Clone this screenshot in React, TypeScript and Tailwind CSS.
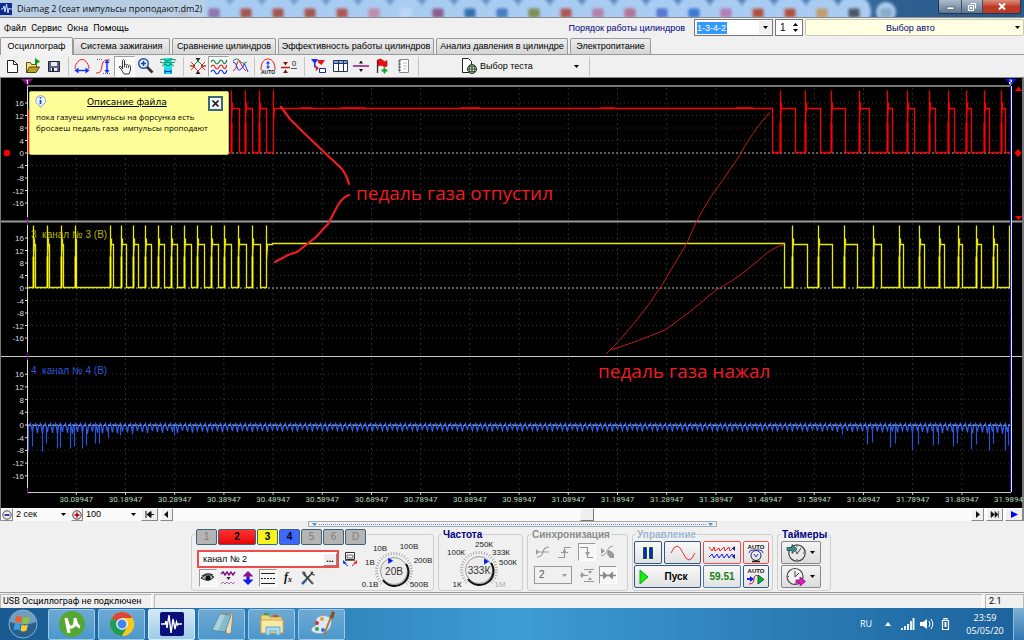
import React from "react";

type Pulse = [number, number];

const RED_LEFT: Pulse[] = [[231, 239], [245, 252], [259, 266]];
const RED_RIGHT: Pulse[] = [
  [780, 795], [805, 820], [831, 845], [859, 869], [887, 892], [907, 914],
  [929, 935], [948, 954], [966, 971], [984, 989], [1001, 1005],
];
const YELLOW_LEFT: Pulse[] = [
  [33, 35], [47, 49], [61, 63], [75, 76], [110, 113], [121, 126], [133, 138],
  [145, 151], [158, 164], [171, 177], [184, 191], [197, 204], [211, 218],
  [224, 231], [238, 246], [252, 260],
];
const YELLOW_RIGHT: Pulse[] = [
  [792, 807], [818, 832], [844, 857], [873, 881], [899, 903], [919, 924],
  [939, 944], [958, 962], [976, 981], [993, 997],
];

function pulseTrain(pulses: Pulse[], low: number, high: number, top: number) {
  return pulses
    .map(([rise, fall]) => `L${rise} ${low}V${top}V${high + 14}L${rise + 1} ${high - 6}V${high}H${fall}V${low}`)
    .join("");
}

function spikes(pulses: Pulse[], from: number, to: number) {
  return pulses.map(([rise]) => `M${rise} ${from}V${to}`).join("");
}

const redPath =
  "M28 109V152H229" + pulseTrain(RED_LEFT, 152, 108, 90) +
  "L273 152V90V122L274 108H772V152" + pulseTrain(RED_RIGHT, 152, 108, 90) + "H1010";
const yellowPath =
  "M28 287" + pulseTrain(YELLOW_LEFT, 287, 244, 225) +
  "L266 287V225V260L267 244H272V243H784V287" + pulseTrain(YELLOW_RIGHT, 287, 244, 225) + "H1009V225";

const DEEP: Pulse[] = [
  [28, 451], [32, 446], [42, 451], [46, 443], [57, 448], [60, 447], [70, 448],
  [74, 446], [82, 448], [86, 445], [95, 443], [99, 443], [108, 438], [120, 435],
  [132, 434], [174, 435], [842, 434], [867, 444], [872, 442], [890, 447],
  [895, 443], [912, 450], [918, 444], [933, 445], [938, 444], [953, 446],
  [957, 443], [971, 449], [976, 444], [989, 450], [993, 443], [1005, 450], [1008, 445],
];

function ripplePath() {
  let d = "M28 426";
  let k = 0;
  for (let x = 29; x < 1007; x += 5, k++) {
    const edge = x < 300 ? (300 - x) / 100 : x > 800 ? (x - 800) / 90 : 0;
    const dip = 429 + (k % 3) + edge;
    d += `L${x} 425L${x + 1} 423L${x + 2} 427L${x + 3} ${dip.toFixed(1)}L${x + 4} 425`;
  }
  return d;
}

const PANELS = [
  { zero: 153, step: 12.5 },
  { zero: 288, step: 12.5 },
  { zero: 425, step: 12.7 },
];
const LEVELS = [16, 12, 8, 4, 0, -4, -8, -12, -16];
const TIMES = Array.from({ length: 19 }, (_, i) => ({
  x: 76.3 + i * 49.2,
  label: (30.08947 + i * 0.1).toFixed(5),
}));

function Scope() {
  return (
    <svg viewBox="0 78 1024 430" className="block w-full bg-black" role="img" aria-label="Осциллограмма">
      <rect x="0" y="78" width="1" height="430" fill="#777" />
      <rect x="1022" y="78" width="2" height="430" fill="#777" />
      {TIMES.map((t) => (
        <g key={t.label}>
          <path d={`M${t.x} 88V491`} stroke="#2b2b2b" strokeDasharray="2 3" />
          <path d={`M${t.x} 492v3`} stroke="#ccc" />
          <text x={t.x} y="502" textAnchor="middle" fontSize="8" fill="#b9dcb9" className="font-['Roboto',sans-serif]">
            {t.label}
          </text>
        </g>
      ))}
      <text x="994" y="502" fontSize="8" fill="#b9dcb9" className="font-['Roboto',sans-serif]">31.9894</text>
      {PANELS.map((p) =>
        LEVELS.map((v) => {
          const y = p.zero - (v / 4) * p.step;
          return (
            <g key={`${p.zero}:${v}`}>
              <path d={`M28 ${y}H1010`} stroke={v === 0 ? "#b8b8b8" : "#303030"} strokeDasharray={v === 0 ? "2 2" : "1 3"} />
              <path d={`M25 ${y}h3`} stroke="#ddd" />
              <text x="24" y={y + 3} textAnchor="end" fontSize="8" fill="#d5dde6" className="font-['Liberation_Sans',sans-serif]">
                {v}
              </text>
            </g>
          );
        })
      )}
      <path d="M27 86H1011" stroke="#777" strokeWidth="2" />
      <path d="M1 221.500H1022" stroke="#999" strokeWidth="2" />
      <path d="M1 356.500H1022" stroke="#ccc" />
      <path d="M27 492.500H1011" stroke="#ccc" />
      <path d="M27.500 86V492" stroke="#ddd" />
      <path d="M27.500 82v4M27.500 217v8M27.500 352v8M27.500 488v6" stroke="#8a118a" />
      <g className="font-['Liberation_Sans',sans-serif]" fontSize="10">
        <text x="31" y="238" fill="#b4b400" xmlSpace="preserve">3  канал № 3 (В)</text>
        <text x="31" y="374" fill="#2f58d8" xmlSpace="preserve">4  канал № 4 (В)</text>
      </g>
      <g transform="translate(.5 .5)" fill="none">
        <path d={redPath} stroke="#f80000" strokeWidth="1.300" />
        <path d={spikes(RED_LEFT.concat(RED_RIGHT), 122, 152)} stroke="#ff0000" strokeWidth="2" />
        <path d="M300 107.500h12M340 107.500h25M460 107.500h20M600 107.500h14M735 107.500h18" stroke="#f80000" strokeWidth="1.500" />
        <path d={yellowPath} stroke="#e8e800" strokeWidth="1.300" />
        <path d={spikes(YELLOW_LEFT.concat(YELLOW_RIGHT), 256, 287)} stroke="#ffff00" strokeWidth="1.800" />
        <path d={ripplePath()} stroke="#2f62ee" strokeWidth="1.200" />
        <path d={DEEP.map(([x, y]) => `M${x} 426V${y}`).join("")} stroke="#2a54d4" strokeWidth="1.200" />
        <path d="M28 425H1010" stroke="#8fa8ff" strokeDasharray="2 3" />
      </g>

      <path d="M281 107L290 119L303 132L325 153L340 167Q346 173 349 184" fill="none" stroke="#ed1c24" strokeWidth="2.200" strokeLinecap="round" />
      <path d="M275 262L288 255L297 252L316 237L328 224L338 205Q343 197 349 195" fill="none" stroke="#ed1c24" strokeWidth="2.200" strokeLinecap="round" />
      <path d="M770 112Q752 132 738 158L720 184Q700 210 687 243L662 285Q636 325 606 354" fill="none" stroke="#c2181e" />
      <path d="M784 245Q774 246 760 259Q736 280 716 290Q690 313 665 330Q636 342 611 350" fill="none" stroke="#c2181e" />
      <g className="font-['Open_Sans',sans-serif]" fontSize="19" fill="#ed1c24">
        <text x="356" y="200">педаль газа отпустил</text>
        <text x="598" y="378">педаль газа нажал</text>
      </g>

      <path d="M21 79h12l-6 6z" fill="#8a118a" />
      <path d="M26.500 80.500l1-.5v4" stroke="#fff" fill="none" />
      <path d="M1005 79h12l-6 6z" fill="#0a0aff" />
      <path d="M1009.500 80h2v2h-2v2h2" stroke="#fff" fill="none" />
      <path d="M1010.500 86V492" stroke="#1010e8" />
      <path d="M1011.500 86V492" stroke="#e8e8ff" />
      <circle cx="7" cy="153" r="3.200" fill="#f00" />
      <path d="M1015 91l3.500-4.500L1022 91zM1015 216h7l-3.500 4.500zM1018 149l3.500 4-3.500 4-3.500-4z" fill="#f00" />
    </svg>
  );
}

function Icon({ children, w = 18, h = 18 }: { children: React.ReactNode; w?: number; h?: number }) {
  return (
    <svg width={w} height={h} viewBox={`0 0 ${w} ${h}`} fill="none" aria-hidden="true" className="shrink-0">
      {children}
    </svg>
  );
}

function ToolButton({ label, pressed, children }: { label: string; pressed?: boolean; children: React.ReactNode }) {
  return (
    <button
      type="button"
      aria-label={label}
      title={label}
      className={
        "flex h-[21px] w-[21px] items-center justify-center border " +
        (pressed ? "border-[#a0a0a0] border-r-white border-b-white bg-[#fafafa]" : "border-transparent")
      }
    >
      <Icon>{children}</Icon>
    </button>
  );
}

function Separator() {
  return <span className="mr-[2px] ml-[4px] h-[19px] w-px bg-[#c4c4c4]" />;
}

function WideSeparator() {
  return <span className="mr-[3px] ml-[5px] h-[19px] w-px bg-[#c4c4c4]" />;
}

function Toolbar() {
  return (
    <div className="flex h-[23px] items-center border-b border-[#888] bg-[#f0f0f0] pl-px" role="toolbar">
      <ToolButton label="Новый">
        <path d="M4.500 3.500h6l4 4v8h-10z" fill="#fff" stroke="#222" />
        <path d="M10.500 3.500v4h4" stroke="#222" />
      </ToolButton>
      <ToolButton label="Открыть">
        <path d="M2.500 15.500v-10h4l1 2h5v3" fill="#f5e27a" stroke="#5b5210" />
        <path d="M2.500 15.500l3-5.500h10l-3.500 5.500z" fill="#b9a02c" stroke="#4e4708" />
        <path d="M11 1l5 3.500-5 3.500z" fill="#0a9a1a" />
      </ToolButton>
      <ToolButton label="Сохранить">
        <path d="M3.500 4.500h11v10h-11z" fill="#5c6488" stroke="#20253f" />
        <path d="M6 5h6v4H6zM6 11h6v3H6z" fill="#e8ebf2" />
        <path d="M7 11h2v3H7z" fill="#222" />
      </ToolButton>
      <Separator />
      <ToolButton label="Растянуть по горизонтали">
        <path d="M2 12C2 8 5 2.500 9 2.500S16 8 16 12" stroke="#f01818" />
        <path d="M3 13.500h12" stroke="#1030ff" strokeWidth="1.400" />
        <path d="M5.500 10.500v6l-4-3zM12.500 10.500v6l4-3z" fill="#1030ff" />
      </ToolButton>
      <ToolButton label="Растянуть по вертикали">
        <path d="M2 16c5 0 5-2 6-7s2-6 5-6h3" stroke="#f01818" />
        <path d="M13 5v9" stroke="#1030ff" strokeWidth="1.500" />
        <path d="M10.500 6L13 2.500 15.500 6zM10.500 13l2.500 3.500 2.500-3.500z" fill="#1030ff" />
        <path d="M3 2.500h6M9 16.500h7" stroke="#666" strokeDasharray="1 1" />
      </ToolButton>
      <span className="w-px" />
      <ToolButton label="Рука" pressed>
        <path d="M6.500 12V3.500q1-2 2 0V8q1-1.500 2 0 1-1 2 .5 1-1 2 .5v4l-1.500 4h-5l-3-5-2-2q1-1.500 3 .5z" fill="#fff" stroke="#222" strokeWidth=".9" />
        <path d="M8.500 8v2.500M10.500 8.500v2.500M12.500 9v2" stroke="#222" strokeWidth=".8" />
      </ToolButton>
      <ToolButton label="Масштаб">
        <circle cx="6.500" cy="6.500" r="4.800" fill="#d8ecff" stroke="#2b4fa0" strokeWidth="1.400" />
        <path d="M4 6.500h5M6.500 4v5" stroke="#1a3fa8" strokeWidth="1.400" />
        <path d="M10 10l5.500 5.500" stroke="#333" strokeWidth="2.600" />
      </ToolButton>
      <span className="w-px" />
      <ToolButton label="Область измерения">
        <path d="M5 1h8v16H5z" fill="#20e0e8" />
        <path d="M1 3l3-1 4 2 4-2 5 1M1 5l3 1 4-1 4 1 4-1M3 9l3-2 3 2 3-2 3 2" stroke="#118844" />
        <path d="M6 14.500h6M6 12.500v4M12 12.500v4" stroke="#1030c0" />
      </ToolButton>
      <WideSeparator />
      <ToolButton label="Сжать сигналы">
        <path d="M1 9h3l5-5 5 5h3" stroke="#118844" />
        <path d="M1 9h3l5 5 5-5h3M2 5l4 4-4 4M16 5l-4 4 4 4" stroke="#e82828" />
        <path d="M6.500 1h5L9 4.500zM6.500 17h5L9 13.500z" fill="#222" />
      </ToolButton>
      <ToolButton label="Раздельно" pressed>
        <path d="M1 5q2-4 4 0t4 0 4 0 4-2" stroke="#118844" strokeWidth="1.200" />
        <path d="M1 10q2-4 4 0t4 0 4 0 4-2" stroke="#f01818" strokeWidth="1.200" />
        <path d="M1 15q2-4 4 0t4 0 4 0 4-2" stroke="#1030ff" strokeWidth="1.200" />
      </ToolButton>
      <ToolButton label="Вместе">
        <path d="M2 4q4-4 7 0t7 1" stroke="#118844" />
        <path d="M2 14q3-1 4-7t4 0 5 7" stroke="#f01818" />
        <path d="M2 5q3 0 4 5t4 2 3-5 4 8" stroke="#1030ff" />
      </ToolButton>
      <Separator />
      <ToolButton label="Автомасштаб">
        <path d="M2 13C2 7 4 2 9 2s7 5 7 11" stroke="#f01818" />
        <path d="M9 5v6" stroke="#1030ff" />
        <path d="M7 6.500L9 4l2 2.500zM7 9.500L9 12l2-2.500z" fill="#1030ff" />
        <text x="9" y="17" textAnchor="middle" fontSize="5" fontWeight="700" fill="#111" className="font-['Liberation_Sans',sans-serif]">AUTO</text>
      </ToolButton>
      <ToolButton label="Обнулить">
        <path d="M1 10.500h9" stroke="#b02020" strokeWidth="1.500" />
        <path d="M3 5h5L5.500 8.500zM3 16h5l-2.500-3.500z" fill="#801818" />
        <text x="14" y="9" textAnchor="middle" fontSize="8" fill="#111" className="font-['Liberation_Sans',sans-serif]">0</text>
        <path d="M11 11.500h6" stroke="#555" />
      </ToolButton>
      <WideSeparator />
      <ToolButton label="Фильтр">
        <path d="M1 2h7l-2.500 4v5l-1.500-1V6z" fill="#1030ff" />
        <path d="M7 3h8l-3.500 5-3-2zM5 8l4 3-3 3z" fill="#e01818" />
        <path d="M9.500 11.500h6v4h-6z" fill="#fff" stroke="#1030a0" />
      </ToolButton>
      <ToolButton label="Таблица">
        <path d="M2.500 3.500h14v11h-14z" fill="#fff" stroke="#24365c" />
        <path d="M3 4h13v2H3z" fill="#7fa4dc" />
        <path d="M2.500 6.500h14M7.500 4v10M12.500 4v10" stroke="#24365c" />
      </ToolButton>
      <ToolButton label="Разделитель">
        <path d="M1 9h16" stroke="#90108c" strokeWidth="1.500" />
        <path d="M7 6.500L9 3.500l2 3zM7 12l2 3 2-3z" fill="#111" />
      </ToolButton>
      <ToolButton label="Метка">
        <path d="M4.500 3v13" stroke="#333" strokeWidth="1.300" />
        <path d="M5 2.500q3-1.500 5 1t4 0V9q-2 1.500-4 0T5 9z" fill="#f00c0c" stroke="#a00" strokeWidth=".6" />
        <path d="M11.500 10.500v6M8.500 13.500h6" stroke="#12a020" strokeWidth="1.800" />
      </ToolButton>
      <ToolButton label="Отчёт">
        <path d="M5.500 2.500h9v13h-9z" fill="#fff" stroke="#888" />
        <path d="M4 4h3M4 7h3M4 10h3M4 13h3" stroke="#555" />
        <path d="M9 6h4M9 9h4M9 12h3" stroke="#bbb" />
      </ToolButton>
      <WideSeparator />
      <button type="button" className="flex h-[21px] w-[163px] items-center pl-[38px] text-[9px] text-black">
        <Icon>
          <path d="M2.500 1.500h6l3 3v11h-9z" fill="#fff" stroke="#222" />
          <circle cx="12" cy="12" r="4.500" fill="#cde8cd" stroke="#223322" />
          <path d="M12 7.500v9M7.500 12h9M9 9q3 2 6 0M9 15q3-2 6 0M10 8q-2 4 0 8M14 8q2 4 0 8" stroke="#223322" strokeWidth=".8" />
        </Icon>
        <span className="pl-[2px]">Выбор теста</span>
        <span className="mr-[6px] ml-auto"><Caret /></span>
      </button>
      <Separator />
    </div>
  );
}

function Caret({ className = "text-black" }: { className?: string }) {
  return (
    <svg width="5" height="3" viewBox="0 0 5 3" className={className} aria-hidden="true">
      <path d="M0 0h5L2.500 3z" fill="currentColor" />
    </svg>
  );
}

const SWATCHES = ["#b04a44", "#8d6fa8", "#a5483c", "#a5483c", "#a5483c", "#b04a44", "#c08aa8", "#bcd8f8", "#8d4f88", "#1f6ca8", "#3a78c0", "#7f8a40", "#b04a3c", "#b27aa8", "#b06a90", "#5070d0", "#2f70d0", "#b078b0", "#b0442c", "#b0442c", "#c09860", "#444c58", "#88a8c8"];

function TitleBar() {
  return (
    <header className="relative flex h-[17px] items-center overflow-hidden bg-[#86add8]">
      <svg viewBox="0 0 1024 17" preserveAspectRatio="none" className="absolute inset-0 h-full w-full" aria-hidden="true">
        <defs>
          <linearGradient id="tb" x1="0" x2="1">
            <stop offset="0" stopColor="#a9c3e0" /><stop offset=".3" stopColor="#6c98cc" />
            <stop offset=".8" stopColor="#4f80b8" /><stop offset=".87" stopColor="#2f5f92" />
            <stop offset="1" stopColor="#2a5888" />
          </linearGradient>
          <filter id="soft" x="-20%" y="-50%" width="140%" height="200%"><feGaussianBlur stdDeviation="1.500" /></filter>
        </defs>
        <rect width="1024" height="17" fill="url(#tb)" />
        <g filter="url(#soft)">
          {SWATCHES.map((c, i) => (
            <g key={i}>
              <circle cx={182 + i * 32} cy="12" r={i === 22 ? 10 : 17} fill="#a9cdf2" />
              <rect x={176 + i * 32} y="8" width="12" height="10" rx="3" fill={c} opacity=".9" />
            </g>
          ))}
          <rect x="-5" y="-4" width="210" height="26" fill="#bdd0e6" opacity=".9" />
        </g>
      </svg>
      <div className="relative flex w-full items-center">
        <Icon w={13} h={13}>
          <path d="M0 1h12v12H0z" fill="#0b2a8c" />
          <path d="M1 7h2l1-3 1 6 1.500-8 1.500 9 1-5 1 1h2" stroke="#cfe0ff" />
        </Icon>
        <h1 className="pl-[4px] font-['Open_Sans',sans-serif] text-[9px] leading-[17px] text-[#111]">
          Diamag 2 (сеат импульсы проподают.dm2)
        </h1>
        <div className="mr-[3px] mb-[3px] ml-auto flex h-[14px] overflow-hidden rounded-b-[3px] border border-t-0 border-[#24364c]">
          <button type="button" aria-label="Свернуть" className="flex w-[23px] items-center justify-center border-r border-[#3c5068] bg-linear-to-b from-[#aebccc] to-[#5f7690]">
            <Icon w={11} h={9}><path d="M2 5h7v2.500H2z" fill="#fff" stroke="#333" strokeWidth=".5" /></Icon>
          </button>
          <button type="button" aria-label="Развернуть" className="flex w-[21px] items-center justify-center border-r border-[#3c5068] bg-linear-to-b from-[#aebccc] to-[#5f7690]">
            <Icon w={10} h={10}><path d="M3.500 1.500h5v5M1.500 3.500h5v5h-5zM3.500 5.500h1v1h-1z" stroke="#fff" strokeWidth="1.200" /></Icon>
          </button>
          <button type="button" aria-label="Закрыть" className="flex w-[37px] items-center justify-center bg-linear-to-b from-[#d99083] via-[#c03a24] to-[#b83a28]">
            <Icon w={10} h={9}><path d="M2 1.500l6 6M8 1.500l-6 6" stroke="#fff" strokeWidth="2" /></Icon>
          </button>
        </div>
      </div>
    </header>
  );
}

function MenuRow() {
  return (
    <div className="flex h-[20px] items-center border-t border-[#8a8a8a] bg-[#f0f0f0]">
      <nav className="flex gap-[5px] pl-[4px] font-['Roboto',sans-serif] text-[9px] text-black">
        <a href="#file">Файл</a>
        <a href="#service">Сервис</a>
        <a href="#windows">Окна</a>
        <a href="#help">Помощь</a>
      </nav>
      <label htmlFor="order" className="ml-auto pr-[9px] text-[9px] text-[#000080]">Порядок работы цилиндров</label>
      <div className="flex h-[17px] w-[79px] items-center border border-[#777] bg-white">
        <input id="order" defaultValue="1-3-4-2" className="ml-[2px] w-[30px] bg-[#3399ff] text-[9px] leading-[12px] text-white outline-none" />
        <button type="button" aria-label="Выбрать порядок" className="ml-auto flex h-[13px] w-[13px] items-center justify-center bg-[#f0f0f0]"><Caret /></button>
      </div>
      <div className="ml-[2px] flex h-[17px] w-[28px] items-center justify-between border border-[#777] bg-white pr-[4px] pl-[4px]">
        <input aria-label="Номер" defaultValue="1" className="w-[10px] text-[10px] leading-[12px] outline-none" />
        <span className="flex flex-col gap-[3px]">
          <button type="button" aria-label="Больше" className="rotate-180"><Caret /></button>
          <button type="button" aria-label="Меньше"><Caret /></button>
        </span>
      </div>
      <button type="button" className="ml-[2px] flex h-[17px] w-[219px] items-center rounded-[2px] border border-[#c8c8b0] bg-[#ffffe1] pr-[3px] text-[9px] text-[#000080]">
        <span className="grow text-center">Выбор авто</span>
        <Caret />
      </button>
    </div>
  );
}

function Tabs() {
  const tab = "h-[16px] rounded-t-[2px] border border-b-0 border-[#999] bg-linear-to-b from-[#eee] to-[#d5d5d5] whitespace-nowrap";
  return (
    <div role="tablist" className="flex items-end gap-[2px] border-b border-[#999] bg-[#f0f0f0] text-[9px] leading-[15px] text-black">
      <button role="tab" aria-selected="true" className="-mb-px h-[18px] w-[73px] rounded-t-[2px] border border-b-0 border-[#999] bg-[#f2f2f2]">Осциллограф</button>
      <button role="tab" className={tab + " -ml-[2px] w-[97px]"}>Система зажигания</button>
      <button role="tab" className={tab + " w-[104px]"}>Сравнение цилиндров</button>
      <button role="tab" className={tab + " w-[156px]"}>Эффективность работы цилиндров</button>
      <button role="tab" className={tab + " w-[132px]"}>Анализ давления в цилиндре</button>
      <button role="tab" className={tab + " w-[81px]"}>Электропитание</button>
    </div>
  );
}

function FileNote() {
  return (
    <aside className="absolute top-[13px] left-[29px] h-[64px] w-[200px] rounded-[2px] border border-[#c9c060] bg-[#ffff99] text-black">
      <div className="flex h-[19px] items-center pl-[4px]">
        <Icon w={13} h={13}>
          <path d="M6.500.5a5.500 5 0 0 1 2 9.500l-2 2.500L5 10A5.500 5 0 0 1 6.500.5z" fill="#eef5ff" stroke="#8aa4c4" />
          <path d="M6.500 2v1.500M6.500 5v4" stroke="#1846c0" strokeWidth="1.800" />
        </Icon>
        <h2 className="ml-[40px] font-['DejaVu_Sans',sans-serif] text-[9px] underline">Описание файла</h2>
        <button type="button" aria-label="Закрыть описание" className="mt-[3px] mr-[5px] ml-auto flex h-[15px] w-[15px] items-center justify-center border-2 border-[#3c6478] bg-[#f4f4f4]">
          <Icon w={9} h={9}><path d="M1.500 1.500l6 6M7.500 1.500l-6 6" stroke="#111" strokeWidth="1.600" /></Icon>
        </button>
      </div>
      <p className="pl-[6px] font-['Open_Sans',sans-serif] text-[8px] leading-[11px] whitespace-pre">
        {"пока газуеш импульсы на форсунка есть\nбросаеш педаль газа  импульсы проподают"}
      </p>
    </aside>
  );
}

const navBtn = "flex h-[13px] items-center justify-center border border-[#fff] border-r-[#888] border-b-[#888] bg-[#f0f0f0]";

function NavigationRow() {
  return (
    <div className="flex h-[13px] items-center gap-[2px] border-x border-[#888] bg-[#fafafa] text-[9px] text-black">
      <button type="button" aria-label="Уменьшить" className={navBtn + " w-[12px]"}>
        <Icon w={10} h={10}><circle cx="5" cy="5" r="4.200" stroke="#555" fill="#eee" /><path d="M2.500 5h5" stroke="#000090" strokeWidth="1.500" /></Icon>
      </button>
      <Choice label="Развёртка" value="2 сек" />
      <button type="button" aria-label="Увеличить" className={navBtn + " w-[12px]"}>
        <Icon w={10} h={10}><circle cx="5" cy="5" r="4.200" stroke="#633" fill="#eee" /><path d="M2.500 5h5M5 2.500v5" stroke="#a00000" strokeWidth="1.500" /></Icon>
      </button>
      <Choice label="Масштаб" value="100" />
      <button type="button" aria-label="В начало" className={navBtn + " w-[17px]"}>
        <Icon w={9} h={7}><path d="M1 0v7M2 3.500L6 .5v6zM6 3.500h3" stroke="#111" fill="#111" /></Icon>
      </button>
      <button type="button" aria-label="Назад" className={navBtn + " w-[13px]"}>
        <Icon w={5} h={7}><path d="M4 0v7L0 3.500z" fill="#111" /></Icon>
      </button>
      <div className="flex h-full grow items-end justify-center pl-[30px]">
        <button type="button" aria-label="Полоса прокрутки" className="h-[13px] w-[14px] border border-[#f8f8f8] border-r-[#777] border-b-[#777] bg-[#eee]" />
      </div>
      <button type="button" aria-label="Вперёд" className={navBtn + " w-[13px]"}>
        <Icon w={5} h={7}><path d="M1 0v7l4-3.500z" fill="#111" /></Icon>
      </button>
      <button type="button" aria-label="В конец" className={navBtn + " w-[17px]"}>
        <Icon w={9} h={7}><path d="M1 .5v6L4.500 3.500zM5 .5v6L8 3.500zM8.500 0v7" stroke="#111" strokeWidth=".6" fill="#111" /></Icon>
      </button>
      <button type="button" aria-label="Воспроизвести" className={navBtn + " w-[18px]"}>
        <Icon w={7} h={7}><path d="M0 0v7l7-3.500z" fill="#0000f0" /></Icon>
      </button>
    </div>
  );
}

function Choice({ label, value }: { label: string; value: string }) {
  return (
    <div className="flex h-[13px] w-[54px] items-center">
      <select aria-label={label} className="block h-[13px] min-w-0 grow appearance-none bg-transparent pl-px text-[9px] leading-[13px] outline-none"><option>{value}</option></select>
      <span className="mr-[3px] flex"><Caret /></span>
    </div>
  );
}

function Group({ title, titleClass, className, children }: { title: React.ReactNode; titleClass: string; className: string; children: React.ReactNode }) {
  return (
    <fieldset className={"h-[62px] rounded-[3px] border border-[#cfcfcf] " + className}>
      <legend className={"ml-[3px] h-[10px] px-px text-[10px] leading-[12px] font-bold " + titleClass}>{title}</legend>
      {children}
    </fieldset>
  );
}

type DialLabel = { x: number; y: number; text: string; muted?: boolean };

function Dial({ cx, cy, width, labels, value, hand }: { cx: number; cy: number; width: number; labels: DialLabel[]; value: string; hand: number }) {
  const ticks = Array.from({ length: 31 }, (_, i) => 135 + i * 9);
  return (
    <svg width={width} height="51" viewBox={`0 0 ${width} 51`} className="shrink-0 font-['Liberation_Sans',sans-serif]" role="img" aria-label={value}>
      {ticks.map((a) => {
        const r = (a * Math.PI) / 180;
        return <path key={a} d={`M${cx + 16 * Math.cos(r)} ${cy + 16 * Math.sin(r)}L${cx + 19 * Math.cos(r)} ${cy + 19 * Math.sin(r)}`} stroke="#909090" strokeWidth=".8" />;
      })}
      <circle cx={cx} cy={cy} r="13.500" fill="#ececec" stroke="#999" />
      <path d={`M${cx + 12} ${cy - 7}A14 14 0 0 1 ${cx - 11} ${cy + 9}`} stroke="#111" strokeWidth="2" fill="none" />
      <path d="M-2 -3L3 0L-2 3z" fill="#0018f0" transform={`translate(${cx + 11 * Math.cos((hand * Math.PI) / 180)} ${cy + 11 * Math.sin((hand * Math.PI) / 180)})`} />
      <text x={cx} y={cy + 4} textAnchor="middle" fontSize="10" fill="#333">{value}</text>
      {labels.map((l) => (
        <text key={l.text} x={l.x} y={l.y} textAnchor="middle" fontSize="8" fill={l.muted ? "#aaa" : "#222"}>{l.text}</text>
      ))}
    </svg>
  );
}

function SmallIcon({ label, pressed, children }: { label: string; pressed?: boolean; children: React.ReactNode }) {
  return (
    <button type="button" aria-label={label} title={label} className={"flex h-[18px] w-[18px] items-center justify-center " + (pressed ? "border border-[#999] border-r-white border-b-white bg-[#f6f6f6]" : "")}>
      <Icon w={16} h={16}>{children}</Icon>
    </button>
  );
}

function ChannelGroup() {
  const base = "h-[16px] rounded-[2px] border border-[#3f6078] text-[10px] leading-[14px] ";
  const off = base + "w-[21px] bg-[#b4b4b4] font-normal text-[#7c7c7c]";
  return (
    <Group
      className="w-[243px]"
      titleClass="text-black"
      title={
        <span className="flex gap-px">
          <button type="button" className={off}>1</button>
          <button type="button" className={base + "w-[38px] bg-linear-to-b from-[#ff3030] to-[#e80000] text-black"}>2</button>
          <button type="button" className={base + "w-[21px] bg-[#f4f420] text-black"}>3</button>
          <button type="button" className={base + "w-[21px] bg-[#3c68ff] text-black"}>4</button>
          <button type="button" className={off}>5</button>
          <button type="button" className={off}>6</button>
          <button type="button" className={off}>D</button>
        </span>
      }
    >
      <div className="flex justify-between">
        <div className="pt-[11px] pl-[5px]">
          <div className="flex items-center gap-[3px]">
            <div className="flex h-[18px] w-[142px] items-center justify-between border-2 border-[#f04c4c] bg-white">
              <input aria-label="Имя канала" defaultValue="канал № 2" className="w-[100px] pl-[4px] text-[9px] leading-[13px] outline-none" />
              <button type="button" aria-label="Обзор" className="h-[13px] w-[14px] border border-white border-r-[#888] border-b-[#888] bg-[#eee] text-[9px] leading-[8px] font-bold">...</button>
            </div>
            <Icon w={16} h={16}>
              <path d="M3.500 1.500h9v7h-9z" fill="#fff" stroke="#333" />
              <path d="M3 9.500h10M5 4h6v3H5z" stroke="#666" />
              <path d="M6 15L1.500 11.500" stroke="#1030ff" /><path d="M1 9v3.500h4z" fill="#1030ff" />
              <path d="M10 15l4-3.500" stroke="#f01818" /><path d="M15 9v3.500h-4z" fill="#f01818" />
            </Icon>
          </div>
          <div className="flex items-center gap-[2px] pt-px pl-[2px]">
            <SmallIcon label="Показать канал" pressed>
              <path d="M1 8q6-6 13-1-5 6-13 1z" fill="#aaa" stroke="#222" />
              <circle cx="8" cy="8" r="2.500" fill="#111" />
              <path d="M2 6q5-4 11-1" stroke="#111" />
            </SmallIcon>
            <SmallIcon label="Инвертировать">
              <path d="M1 4l2-2 2 3 2-3 2 3 2-3 2 3 2-3" stroke="#8a118a" strokeWidth="1.500" />
              <path d="M1 14l2-2 2 2 2-2 2 2 2-2 2 2 2-2" stroke="#c060c0" />
              <path d="M6.500 7h4l-2 3z" fill="#222" />
            </SmallIcon>
            <SmallIcon label="Сдвиг">
              <path d="M8 1L2.500 6.500h4V8h3V6.500h4z" fill="#8a118a" />
              <path d="M8 15L2.500 9.500h4V7h3v2.500h4z" fill="#1818f0" />
            </SmallIcon>
            <SmallIcon label="Линии" pressed>
              <path d="M1 3.500h14M1 13.500h14" stroke="#222" />
              <path d="M1 8.500h14" stroke="#222" strokeDasharray="2 1" />
            </SmallIcon>
            <SmallIcon label="Функция">
              <text x="8" y="11" textAnchor="middle" fontSize="12" fontStyle="italic" fontWeight="700" fill="#111" className="font-['Liberation_Serif',serif]">f<tspan fontSize="8" dy="1">x</tspan></text>
            </SmallIcon>
            <SmallIcon label="Настройки">
              <path d="M3 3l10 11" stroke="#555" strokeWidth="2" />
              <path d="M13 2L4 12" stroke="#333" strokeWidth="1.500" />
              <path d="M2 14l4-4" stroke="#3060a0" strokeWidth="2.500" />
              <path d="M2 2l3 .5v3M11 1.500l1 3 3 .5" stroke="#333" />
            </SmallIcon>
          </div>
        </div>
        <Dial
          cx={33} cy={32} width={72} value="20В" hand={250}
          labels={[
            { x: 9, y: 48, text: "0.1В" }, { x: 9, y: 26, text: "1В" }, { x: 19, y: 12, text: "10В" },
            { x: 48, y: 10, text: "100В" }, { x: 62, y: 24, text: "200В" }, { x: 58, y: 48, text: "500В" },
          ]}
        />
      </div>
    </Group>
  );
}

function SyncGroup() {
  return (
    <Group className="w-[101px]" titleClass="text-[#8c8c8c]" title="Синхронизация">
      <div className="grid grid-cols-4 items-center gap-y-[5px] px-[6px] pt-[4px]">
        <SmallIcon label="Любой фронт"><path d="M2 13q5 0 6-5t6-5M1 8h13" stroke="#999" strokeWidth="1.200" /><path d="M1 5l3 3-3 3z" fill="#999" /></SmallIcon>
        <SmallIcon label="Передний фронт"><path d="M1 13.500h6.500v-10H14M4 8.500h7" stroke="#999" strokeWidth="1.200" /><path d="M5 9l2.500-4L10 9z" fill="#999" /></SmallIcon>
        <SmallIcon label="Задний фронт" pressed><path d="M1 3.500h7.500v10H14" stroke="#999" strokeWidth="1.200" /><path d="M6 8l2.500 4L11 8z" fill="#999" /></SmallIcon>
        <SmallIcon label="Ручная"><path d="M1 12q4 0 6-5t6-5" stroke="#999" /><path d="M1 4l4 3-4 3z" fill="#999" /><path d="M8 6l3 1 3 3v4h-4l-3-4z" fill="#999" /></SmallIcon>
        <span className="col-span-2 flex h-[18px] w-[38px] items-center border border-[#999] pr-[4px]">
          <select aria-label="Канал синхронизации" className="block h-[16px] min-w-0 grow appearance-none bg-transparent pl-[4px] text-[10px] leading-[16px] text-[#555]"><option>2</option></select>
          <Caret className="text-[#999]" />
        </span>
        <SmallIcon label="Уровень"><path d="M1 8.500h8M5 2.500h10M5 14.500h10" stroke="#999" /><path d="M2 5l4 3-4 3zM9 4h4l-2 3zM9 13h4l-2-3z" fill="#999" /></SmallIcon>
        <SmallIcon label="Сближение" pressed><path d="M0 8.500h16" stroke="#888" strokeWidth="1.400" /><path d="M3 4.500l5 4-5 4zM13 4.500l-5 4 5 4z" fill="#888" /></SmallIcon>
      </div>
    </Group>
  );
}

function ControlGroup() {
  const b = "flex h-[23px] items-center justify-center rounded-[2px] border bg-linear-to-b from-[#f8f8f8] to-[#e2e2e2] ";
  const auto = <text x="11" y="7" textAnchor="middle" fontSize="6" fontWeight="700" fill="#111" className="font-['Liberation_Sans',sans-serif]">AUTO</text>;
  return (
    <Group className="w-[141px]" titleClass="text-[#9db8d0]" title="Управление">
      <div className="grid grid-cols-[28px_37px_38px_26px] gap-x-[2px] gap-y-px px-px pt-[2px]">
        <button type="button" aria-label="Пауза" className={b + "border-[#34587c]"}>
          <Icon w={12} h={12}><path d="M1.500 .5h3v11h-3zM7.500 .5h3v11h-3z" fill="#1020d0" stroke="#0b5c34" /></Icon>
        </button>
        <button type="button" aria-label="Синус" className={b + "border-[#34587c]"}>
          <Icon w={26} h={18}><path d="M1 9Q7-5 13 9T25 9" stroke="#f03030" /></Icon>
        </button>
        <button type="button" aria-label="Запись" className={b + "border-[#f04c4c]"}>
          <Icon w={28} h={18}>
            <path d="M1 3l3 4 2-4 1 4 4-3 1 3 4-4 1 4 4-4 1 4 4-4" stroke="#f01818" />
            <path d="M1 13l3-3 2 4 3-4 2 4 3-4 2 4 3-4 2 4 3-4 2 3" stroke="#1818f0" />
            <path d="M27 2v5l-3-2.500zM27 10v5l-3-2.500z" fill="#1818a0" />
          </Icon>
        </button>
        <button type="button" aria-label="Авто настройка" className={b + "border-[#f04c4c]"}>
          <Icon w={22} h={21}>{auto}<circle cx="11" cy="13.500" r="5" stroke="#222" /><path d="M9 12l2 3 2-3" stroke="#2030d0" /><path d="M4 11q0-3 4-3h6q4 0 4 3" stroke="#2030d0" /><path d="M7 19.500h8" stroke="#222" strokeWidth="1.500" /></Icon>
        </button>
        <button type="button" className={b + "col-span-2 gap-[15px] border-[#34587c] pr-[8px] text-[10px] leading-[12px] font-bold text-black"}>
          <Icon w={10} h={16}><path d="M1 1v14l8-7z" fill="#10f010" stroke="#18a018" /></Icon>
          Пуск
        </button>
        <button type="button" className={b + "border-[#4c7eb0] text-[10px] leading-[12px] font-bold text-[#128012]"}>59.51</button>
        <button type="button" aria-label="Авто пуск" className={b + "border-[#34587c]"}>
          <Icon w={22} h={21}>{auto}<path d="M4 18q5 0 5-5t5-3" stroke="#d01818" /><path d="M2 13h4" stroke="#1818f0" strokeWidth="2" /><path d="M5 10v6l4-3z" fill="#1818f0" /><path d="M13 9v9l6-4.500z" fill="#10b020" stroke="#064" /></Icon>
        </button>
      </div>
    </Group>
  );
}

function TimerGroup() {
  const b = "flex h-[23px] w-[40px] items-center justify-between rounded-[2px] border border-[#888] bg-linear-to-b from-[#f4f4f4] to-[#dcdcdc] pl-[4px] pr-[5px]";
  return (
    <Group className="w-[54px]" titleClass="text-[#000080]" title="Таймеры">
      <div className="flex flex-col gap-px pt-[2px] pl-[3px]">
        <button type="button" aria-label="Таймер начала" className={b}>
          <Icon w={20} h={20}><circle cx="11" cy="10" r="8.200" fill="#e8e8e8" stroke="#444" strokeWidth="1.200" /><path d="M9 6l2 5 4-6M11 3v1M17 10h1M11 16v1" stroke="#444" /><path d="M1 4.500h5v-3l5 4.500-5 4.500v-3H1z" fill="#3c8c90" stroke="#1c5054" strokeWidth=".8" /></Icon>
          <Caret />
        </button>
        <button type="button" aria-label="Таймер окончания" className={b}>
          <Icon w={20} h={20}><circle cx="9" cy="9.500" r="8" fill="#f0f0f0" stroke="#444" strokeWidth="1.200" /><path d="M9 10V4M9 10l4-4M2 9.500h1M9 16v1" stroke="#444" /><path d="M10 13h4v-3l5.500 4.500L14 19v-3h-4z" fill="#e818c8" stroke="#801070" strokeWidth=".8" /></Icon>
          <Caret />
        </button>
      </div>
    </Group>
  );
}

function ControlPanel() {
  return (
    <section className="border-b border-[#999] bg-[#f0f0f0]">
      <div className="mx-auto flex h-[6px] w-[409px] items-center justify-between border border-[#aaa] px-[3px] text-[#3c96e8]">
        <Caret className="text-[#3c96e8]" />
        <span className="mx-[2px] grow border-t border-dotted border-[#4a9ce8]" />
        <Caret className="text-[#3c96e8]" />
      </div>
      <div className="flex justify-center gap-[4px] pt-[2px] pr-[2px] pb-px">
        <ChannelGroup />
        <Group className="w-[85px]" titleClass="text-[#000080]" title="Частота">
          <Dial
            cx={40} cy={31} width={83} value="333К" hand={310}
            labels={[
              { x: 18, y: 48, text: "1К" }, { x: 17, y: 16, text: "100К" }, { x: 45, y: 8, text: "250К" },
              { x: 62, y: 16, text: "333К" }, { x: 69, y: 26, text: "500К" }, { x: 61, y: 48, text: "1М", muted: true },
            ]}
          />
        </Group>
        <SyncGroup />
        <ControlGroup />
        <TimerGroup />
      </div>
    </section>
  );
}

function StatusBar() {
  return (
    <footer className="flex h-[15px] gap-[2px] bg-[#f0f0f0] pt-px font-['Roboto',sans-serif] text-[9px] text-black">
      <span className="w-[152px] border border-[#b8b8b8] border-r-white border-b-0 pl-[2px] leading-[12px] whitespace-nowrap">USB Осциллограф не подключен</span>
      <span className="grow border border-[#b8b8b8] border-r-white border-b-0" />
      <span className="w-[39px] border border-[#b8b8b8] border-b-0 pl-[3px] leading-[12px]">2.1</span>
    </footer>
  );
}

function TaskButton({ label, active, children }: { label: string; active?: boolean; children: React.ReactNode }) {
  return (
    <button
      type="button"
      aria-label={label}
      className={
        "flex h-[31px] w-[47px] items-center justify-center rounded-[2px] border " +
        (active ? "border-[#d8ecfa] bg-linear-to-b from-[#d4e8f6] to-[#9ccbe8]" : "border-[#9cc8e6] bg-linear-to-b from-[#6fa9d2] to-[#4a98cc]")
      }
    >
      <Icon w={28} h={28}>{children}</Icon>
    </button>
  );
}

function Taskbar() {
  return (
    <div className="flex h-[32px] items-center gap-[3px] bg-linear-to-r from-[#1a5a92] via-[#3f9cd4] to-[#1c629c] font-['Open_Sans',sans-serif] text-white">
      <button type="button" aria-label="Пуск" className="flex w-[45px] justify-center">
        <Icon w={30} h={30}>
          <circle cx="15" cy="15" r="14" fill="#2a5f8c" stroke="#7fb4d8" />
          <path d="M2 13a13 12 0 0 1 26 0q-13 5-26 0z" fill="#8fb8d6" opacity=".7" />
          <path d="M8 8q3-2 6 0l-1 6q-3-2-6 0z" fill="#f06028" />
          <path d="M15 8q3 2 7-.5l-1.500 6q-3 2-6.500.5z" fill="#8cc43c" />
          <path d="M6.500 15.500q3-2 6 0l-1 6q-3-2-6 0z" fill="#38a0e8" />
          <path d="M13.500 15.500q3 2 6.500 0l-1.500 6q-3 2-6 0z" fill="#f8cc30" />
        </Icon>
      </button>
      <TaskButton label="µTorrent">
        <circle cx="14" cy="14" r="13" fill="#56a632" />
        <path d="M8 8l3 15M9 11q1 7 5 6t3-9M17 8q1 8 5 9" stroke="#fff" strokeWidth="3.200" />
      </TaskButton>
      <TaskButton label="Chrome">
        <circle cx="14" cy="14" r="12" fill="#f8c820" />
        <path d="M14 14L3.600 8A12 12 0 0 1 24.400 8z" fill="#dc4434" />
        <path d="M14 14L3.600 8A12 12 0 0 0 14 26l5-9z" fill="#1f9c58" />
        <path d="M14 8h10.400A12 12 0 0 1 14 26l5.500-9z" fill="#f8c820" />
        <circle cx="14" cy="14" r="5.800" fill="#fff" /><circle cx="14" cy="14" r="4.500" fill="#4284f0" />
      </TaskButton>
      <TaskButton label="Diamag 2" active>
        <rect x="2" y="2" width="24" height="24" rx="2" fill="#0a1078" />
        <path d="M3 14h4l1-3 1 7 2-13 2 18 2-14 2 10 1.500-7 1 3 1-1h3.500" stroke="#fff" strokeWidth="1.400" />
      </TaskButton>
      <TaskButton label="Блокнот">
        <path d="M12 3l13 1-2 19-4 1z" fill="#e8dcc0" stroke="#a08860" />
        <path d="M12 4l11 1-6 17-13-2z" fill="#86bccb" stroke="#5a8c9c" />
        <path d="M12 4.500l5 .5-7 15.500-5-1z" fill="#a8d2dc" />
      </TaskButton>
      <TaskButton label="Проводник">
        <path d="M3 5h7l2 2h12v16H3z" fill="#f0d478" stroke="#b89440" />
        <path d="M3 10h22v13H3z" fill="#fae8a4" stroke="#c8a850" />
        <path d="M6 3h5v2H6z" fill="#30a848" /><path d="M15 5h5v2h-5z" fill="#d04838" />
        <path d="M8 25v-8h14v8h-4v-4h-6v4z" fill="#a8dcf0" stroke="#60a8cc" />
      </TaskButton>
      <TaskButton label="Paint">
        <path d="M12 6c9-2 13 3 11 9-2 7-9 10-16 8-6-2-4-6 0-7 3-1-2-8 5-10z" fill="#dce8f4" stroke="#88a4c0" />
        <circle cx="14" cy="9" r="2" fill="#e8a030" /><circle cx="9" cy="13" r="2" fill="#d03830" />
        <circle cx="9" cy="19" r="2" fill="#38a048" /><circle cx="15" cy="20" r="2" fill="#3870d0" />
        <path d="M24 4L16 25" stroke="#b87838" strokeWidth="2" /><path d="M22 8l2-7 3 1-2 7z" fill="#8c4c28" />
      </TaskButton>
      <span className="ml-auto pr-[9px] text-[9px]">RU</span>
      <Icon w={8} h={6}><path d="M1 5l3-4 3 4z" fill="#fff" /></Icon>
      <span className="w-[2px]" />
      <Icon w={15} h={14}><path d="M2 13v-2M5 13v-4M8 13V7M11 13V4M13.500 13V1" stroke="#fff" strokeWidth="1.800" /></Icon>
      <Icon w={16} h={14}><path d="M2 5h3l4-3v10L5 9H2z" fill="#fff" /><path d="M11 4q2 3 0 6M13 2q3.500 5 0 10" stroke="#fff" /></Icon>
      <Icon w={16} h={14}><path d="M5.500 3.500h6v9h-6zM7 1.500h3v2H7z" stroke="#fff" strokeWidth="1.200" /><path d="M8.500 5v5" stroke="#fff" strokeWidth="2" /></Icon>
      <time className="flex w-[54px] flex-col items-center pl-[4px] text-[9px] leading-[13px]">
        <span>23:59</span>
        <span>05/05/20</span>
      </time>
      <button type="button" aria-label="Показать рабочий стол" className="h-[32px] w-[11px] border-l border-[#8fc0e0] bg-linear-to-b from-[#7fb0d4] to-[#2f78b0]" />
    </div>
  );
}

export default function App() {
  return (
    <div className="flex min-h-screen flex-col bg-[#f0f0f0] font-['Liberation_Sans',sans-serif] leading-[12px]">
      <TitleBar />
      <MenuRow />
      <Tabs />
      <Toolbar />
      <main className="relative">
        <Scope />
        <FileNote />
      </main>
      <NavigationRow />
      <ControlPanel />
      <StatusBar />
      <Taskbar />
    </div>
  );
}
